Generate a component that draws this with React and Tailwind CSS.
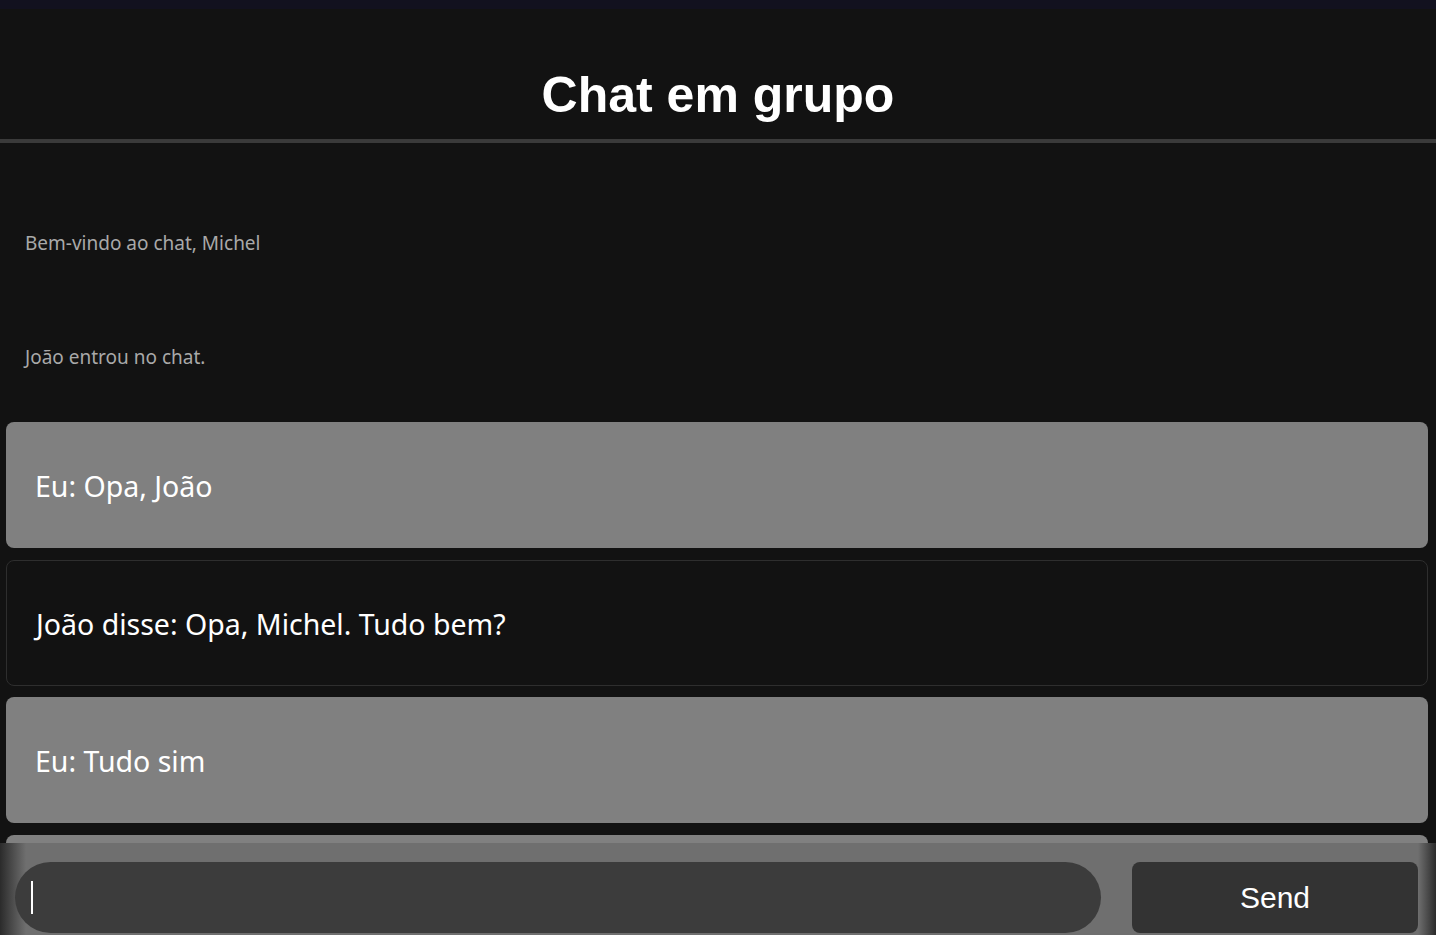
import React, { useState } from 'react';

const messages = [
  { type: 'system', text: 'Bem-vindo ao chat, Michel' },
  { type: 'system', text: 'João entrou no chat.' },
  { type: 'mine', text: 'Eu: Opa, João' },
  { type: 'other', text: 'João disse: Opa, Michel. Tudo bem?' },
  { type: 'mine', text: 'Eu: Tudo sim' },
];

const App = () => {
  const [text, setText] = useState('');

  return (
    <div className="h-screen flex flex-col bg-[#121212] overflow-hidden" style={{ fontFamily: '"Noto Sans", sans-serif' }}>
      <div className="h-[9px] bg-[#12111f] shrink-0" />
      <header className="h-[134px] shrink-0 flex items-center justify-center border-b-4 border-[#3a3a3a] pt-[42px]">
        <h1 className="text-[50px] font-bold text-white font-['Liberation_Sans',Arial,sans-serif] leading-none">
          Chat em grupo
        </h1>
      </header>

      <main className="flex-1 overflow-hidden pt-[43px] pl-[6px] pr-[8px]">
        <div className="flex flex-col">
          {messages.map((msg, index) => {
            if (msg.type === 'system') {
              return (
                <div key={index} className="h-[114px] flex items-center pl-[19px] text-[19px] text-[#a9a9a9]">
                  {msg.text}
                </div>
              );
            }
            return (
              <div
                key={index}
                className={`h-[126px] shrink-0 flex items-center px-[29px] pt-[3px] rounded-lg text-[28.5px] text-white mb-[11.5px] ${
                  msg.type === 'mine' ? 'bg-[#808080]' : 'bg-[#121212] border border-[#2e2e2e]'
                } ${index === 2 ? 'mt-[8px]' : ''}`}
              >
                {msg.text}
              </div>
            );
          })}
          <div className="h-[126px] shrink-0 rounded-lg bg-[#808080]" />
        </div>
      </main>

      <footer className="h-[92px] shrink-0 flex items-start gap-[31px] pt-[19px] pl-[15px] pr-[18px] bg-[linear-gradient(to_right,#2b2b2b_0px,#6f6f6f_26px,#6f6f6f_calc(100%-18px),#2b2b2b_100%)]">
        <div className="flex-1 h-[71px] rounded-[36px] bg-[#3c3c3c] flex items-center pl-[16px]">
          <span className="w-[2px] h-[33px] bg-white shrink-0" />
          <input
            value={text}
            onChange={(e) => setText(e.target.value)}
            className="flex-1 min-w-0 h-full bg-transparent outline-none text-white text-[24px] pr-6"
          />
        </div>
        <button className="w-[286px] h-[71px] rounded-lg bg-[#333333] text-white text-[30px] font-['Liberation_Sans',Arial,sans-serif]">
          Send
        </button>
      </footer>
    </div>
  );
};

export default App;
